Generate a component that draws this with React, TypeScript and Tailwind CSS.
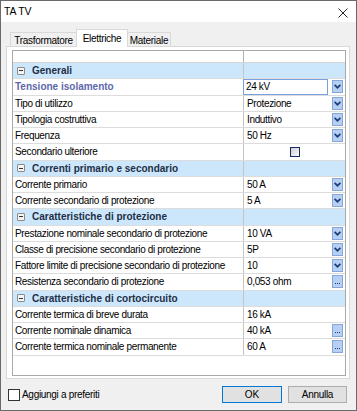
import React from "react";

type Row =
  | { kind: "section"; label: string }
  | { kind: "prop"; label: string; value?: string; btn?: "drop" | "dots" | "check"; selected?: boolean };

const rows: Row[] = [
  { kind: "section", label: "Generali" },
  { kind: "prop", label: "Tensione isolamento", value: "24 kV", btn: "drop", selected: true },
  { kind: "prop", label: "Tipo di utilizzo", value: "Protezione", btn: "drop" },
  { kind: "prop", label: "Tipologia costruttiva", value: "Induttivo", btn: "drop" },
  { kind: "prop", label: "Frequenza", value: "50 Hz", btn: "drop" },
  { kind: "prop", label: "Secondario ulteriore", btn: "check" },
  { kind: "section", label: "Correnti primario e secondario" },
  { kind: "prop", label: "Corrente primario", value: "50 A", btn: "drop" },
  { kind: "prop", label: "Corrente secondario di protezione", value: "5 A", btn: "drop" },
  { kind: "section", label: "Caratteristiche di protezione" },
  { kind: "prop", label: "Prestazione nominale secondario di protezione", value: "10 VA", btn: "drop" },
  { kind: "prop", label: "Classe di precisione secondario di protezione", value: "5P", btn: "drop" },
  { kind: "prop", label: "Fattore limite di precisione secondario di protezione", value: "10", btn: "drop" },
  { kind: "prop", label: "Resistenza secondario di protezione", value: "0,053 ohm", btn: "dots" },
  { kind: "section", label: "Caratteristiche di cortocircuito" },
  { kind: "prop", label: "Corrente termica di breve durata", value: "16 kA" },
  { kind: "prop", label: "Corrente nominale dinamica", value: "40 kA", btn: "dots" },
  { kind: "prop", label: "Corrente termica nominale permanente", value: "60 A", btn: "dots" },
];

function DropBtn() {
  return (
    <div className="w-[11px] h-[13px] shrink-0 bg-[#b7cff3] border border-[#83a6db] flex items-center justify-center">
      <svg width="7" height="5" viewBox="0 0 7 5">
        <path d="M0.6 0.9 L3.5 3.7 L6.4 0.9" stroke="#1f3d78" strokeWidth="1.7" fill="none" />
      </svg>
    </div>
  );
}

function DotsBtn() {
  return (
    <div className="w-[11px] h-[13px] shrink-0 bg-[#b7cff3] border border-[#83a6db] flex items-end justify-center pb-[3px] gap-[1px]">
      <div className="w-[1px] h-[1px] bg-[#1f3d78]" />
      <div className="w-[1px] h-[1px] bg-[#1f3d78]" />
      <div className="w-[1px] h-[1px] bg-[#1f3d78]" />
    </div>
  );
}

function MinusBox() {
  return (
    <div className="w-[8px] h-[8px] rounded-[1px] border border-[#8c8c8c] bg-[#f4f4f4] flex items-center justify-center">
      <div className="w-[4px] h-[1px] bg-[#333]" />
    </div>
  );
}

function GridRow({ row }: { row: Row }) {
  if (row.kind === "section") {
    return (
      <div className="flex h-[16.25px] bg-[#cce7fb] border-b border-[#dcdcdc]">
        <div className="w-[231px] shrink-0 border-r border-[#c4c4c4] flex items-center pl-[4px] gap-[7px]">
          <MinusBox />
          <span className="text-[10px] font-bold text-[#1f2f47] whitespace-nowrap">{row.label}</span>
        </div>
        <div className="flex-1" />
      </div>
    );
  }
  return (
    <div className="flex h-[16.25px] bg-white border-b border-[#dcdcdc]">
      <div className="w-[231px] shrink-0 border-r border-[#c4c4c4] flex items-center pl-[2px] overflow-hidden">
        {row.selected ? (
          <span className="text-[10px] font-bold text-[#5d68ac] whitespace-nowrap">{row.label}</span>
        ) : (
          <span className="text-[10px] tracking-[-0.35px] text-black whitespace-nowrap">{row.label}</span>
        )}
      </div>
      <div className="flex-1 flex items-center pr-[2px] min-w-0">
        {row.btn === "check" ? (
          <div className="flex-1 flex justify-center pl-[2px]">
            <div className="w-[10px] h-[10px] border border-[#1c2a6b] bg-gradient-to-br from-[#cfcfcf] to-[#fafafa]" />
          </div>
        ) : row.selected ? (
          <>
            <div className="w-[85px] h-full border border-[#789fe0] flex items-center pl-[2px] -ml-px">
              <span className="text-[10px] tracking-[-0.35px] text-black whitespace-nowrap">{row.value}</span>
            </div>
            <div className="flex-1" />
            <DropBtn />
          </>
        ) : (
          <>
            <span className="flex-1 pl-[3px] text-[10px] tracking-[-0.35px] text-black whitespace-nowrap">{row.value}</span>
            {row.btn === "drop" && <DropBtn />}
            {row.btn === "dots" && <DotsBtn />}
          </>
        )}
      </div>
    </div>
  );
}

export default function App() {
  return (
    <div className="w-[357px] h-[411px] border border-[#6a6a6a] bg-[#f0f0f0] flex flex-col font-['Liberation_Sans',Arial,sans-serif] text-black overflow-hidden">
      {/* Title bar */}
      <div className="h-[21px] bg-white flex items-center justify-between pl-[3px] pr-[8px] shrink-0">
        <span className="text-[10.5px] tracking-[-0.2px] pt-[1px]">TA TV</span>
        <svg width="10" height="10" viewBox="0 0 10 10" className="mt-[2px]">
          <path d="M0.5 0.5 L9.5 9.5 M9.5 0.5 L0.5 9.5" stroke="#222" strokeWidth="1" />
        </svg>
      </div>

      {/* Tabs */}
      <div className="pt-[7px] px-[5px] shrink-0">
        <div className="flex items-end h-[17px] pl-[4px]">
          <div className="h-[14px] w-[67px] border border-b-0 border-[#d9d9d9] bg-[#f0f0f0] flex items-center justify-center">
            <span className="text-[10px] tracking-[-0.3px] pt-[1px]">Trasformatore</span>
          </div>
          <div className="relative z-10 h-[18px] -mb-px w-[52px] -ml-px border border-b-0 border-[#d9d9d9] bg-white flex items-center justify-center">
            <span className="text-[10px] tracking-[-0.3px] -mt-[1px]">Elettriche</span>
          </div>
          <div className="h-[14px] w-[44px] -ml-px border border-b-0 border-[#d9d9d9] bg-[#f0f0f0] flex items-center justify-center">
            <span className="text-[10px] tracking-[-0.3px] pt-[1px]">Materiale</span>
          </div>
        </div>
        {/* Panel */}
        <div className="w-[344px] h-[333px] border border-[#d9d9d9] bg-white pl-[5px] pt-[3px]">
          <div className="w-[334px] h-[326px] border border-[#a9a9a9] bg-white flex flex-col overflow-hidden">
            <div className="flex h-[12px] border-b border-[#d4d4d4] shrink-0">
              <div className="w-[231px] border-r border-[#b4b4b4]" />
              <div className="flex-1" />
            </div>
            {rows.map((r, i) => (
              <GridRow key={i} row={r} />
            ))}
          </div>
        </div>
      </div>

      {/* Bottom bar */}
      <div className="flex-1 flex items-center justify-between pl-[7px] pr-[9px]">
        <div className="flex items-center gap-[2px]">
          <div className="w-[12px] h-[12px] border border-[#333] bg-white" />
          <span className="text-[10px] tracking-[-0.3px]">Aggiungi a preferiti</span>
        </div>
        <div className="flex items-center gap-[6px]">
          <div className="w-[60px] h-[17px] border border-[#0078d7] bg-[#e1e1e1] flex items-center justify-center">
            <span className="text-[10px]">OK</span>
          </div>
          <div className="w-[59px] h-[17px] border border-[#adadad] bg-[#e1e1e1] flex items-center justify-center">
            <span className="text-[10px] tracking-[-0.3px]">Annulla</span>
          </div>
        </div>
      </div>
    </div>
  );
}
